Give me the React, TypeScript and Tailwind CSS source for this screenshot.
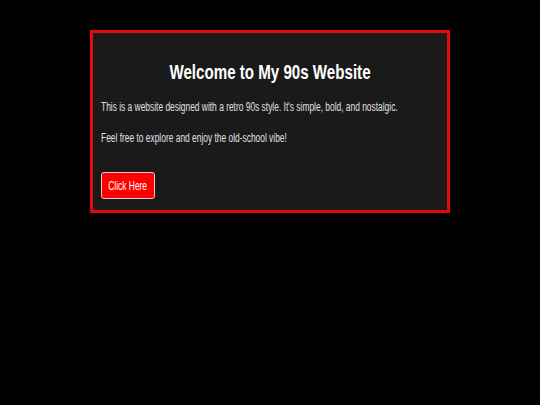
import React from "react";

// No narrow face is installed, so the condensed look of the reference is
// reproduced by squeezing Liberation Sans horizontally.
export default function App() {
  return (
    <div
      className="min-h-[405px] w-full bg-black pt-[30px]"
      style={{ fontFamily: '"Liberation Sans", Arial, sans-serif' }}
    >
      <div className="mx-auto w-[360px] border-[3px] border-[#e30a0a] bg-[#1a1a1a] px-[8px] pt-[27px] pb-[11px]">
        <h1 className="scale-x-[0.72] whitespace-nowrap text-center text-[21px] font-bold leading-[24px] text-white">
          Welcome to My 90s Website
        </h1>
        <p className="mt-[15px] origin-left scale-x-[0.7] whitespace-nowrap text-[12px] leading-[16px] text-[#e0e0e0]">
          This is a website designed with a retro 90s style. It's simple, bold, and nostalgic.
        </p>
        <p className="mt-[15px] origin-left scale-x-[0.7] whitespace-nowrap text-[12px] leading-[16px] text-[#e0e0e0]">
          Feel free to explore and enjoy the old-school vibe!
        </p>
        <button className="mt-[26px] flex h-[27px] w-[54px] items-center justify-center rounded-[3px] border border-[#f2c4c4] bg-[#ff0000] px-0 text-[12px] text-white">
          <span className="inline-block scale-x-[0.7] whitespace-nowrap">Click Here</span>
        </button>
      </div>
    </div>
  );
}
